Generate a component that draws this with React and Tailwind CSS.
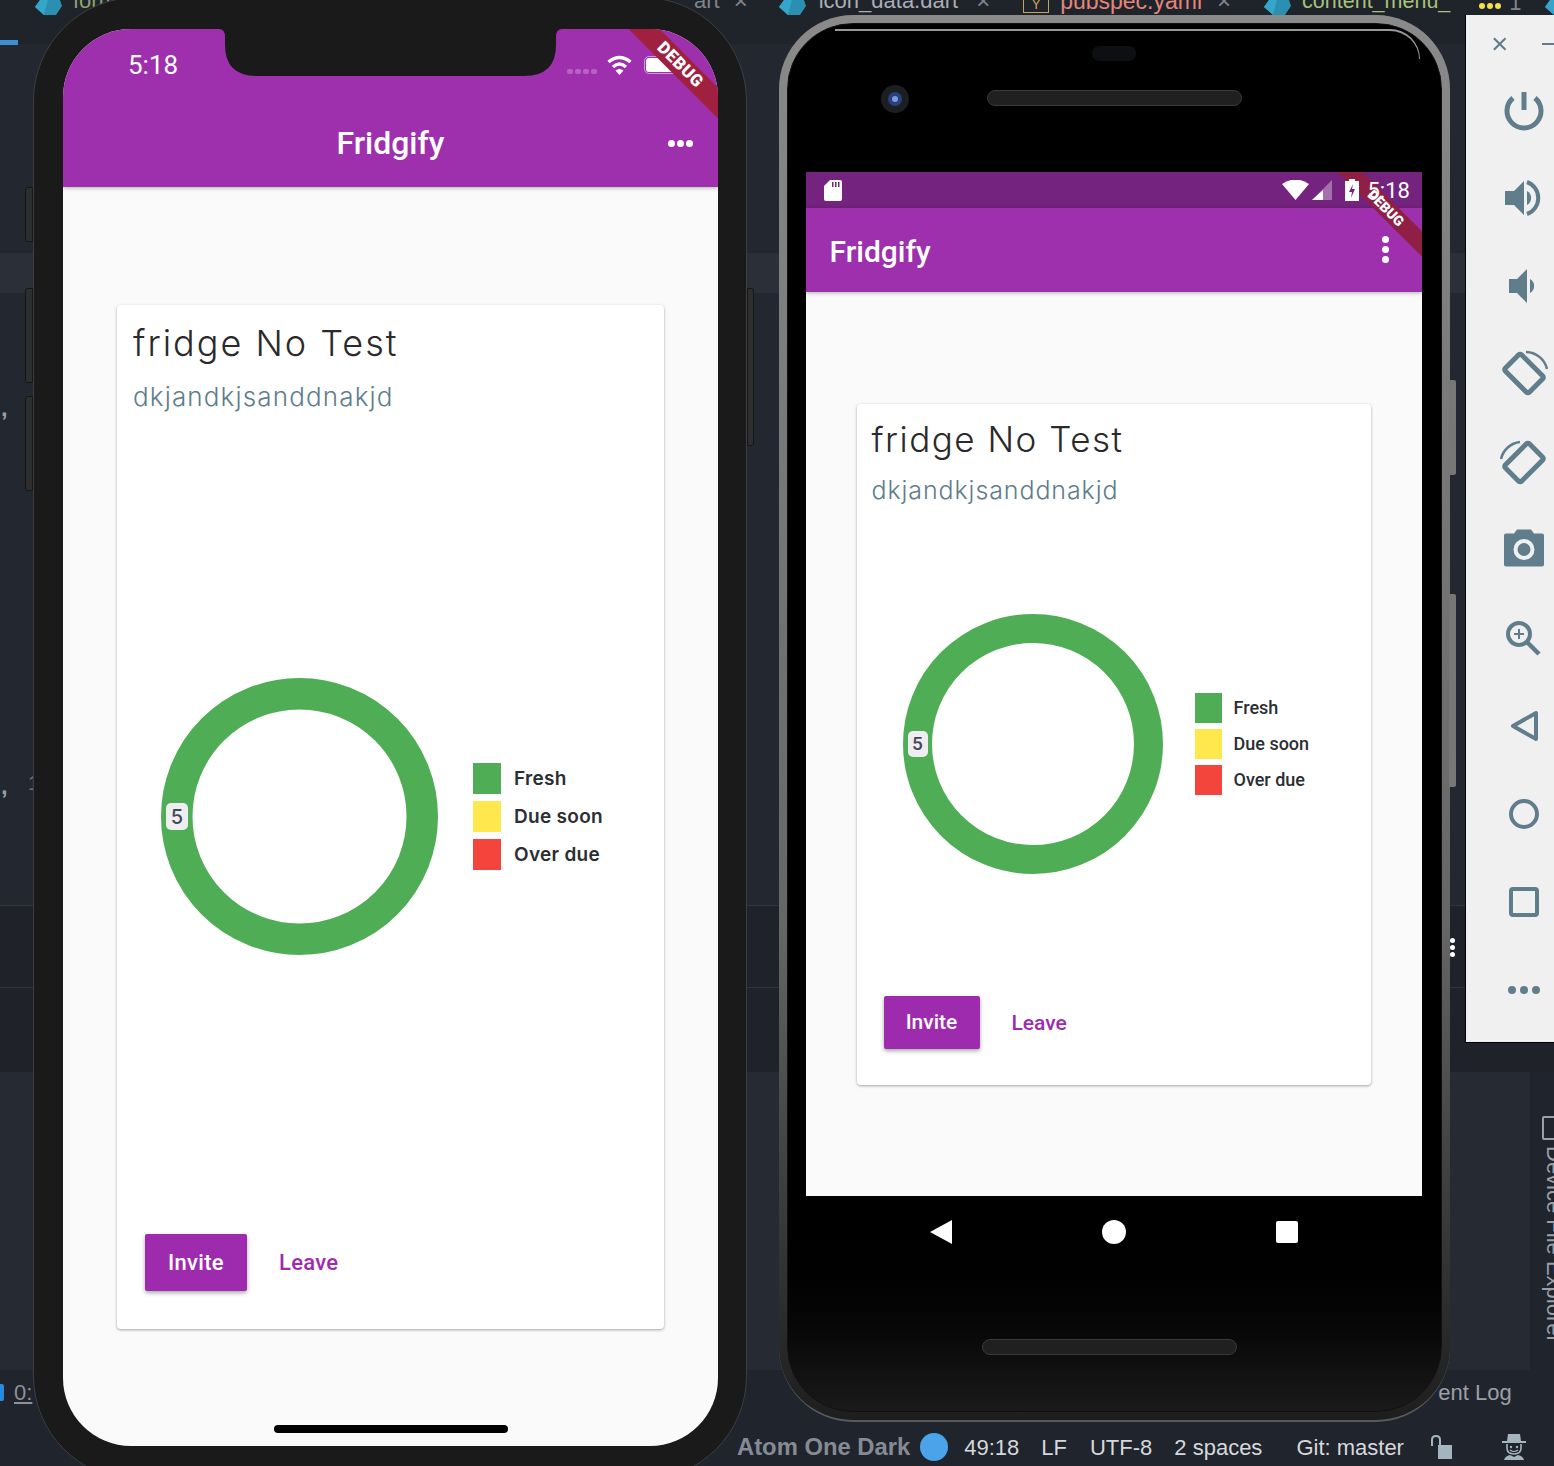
import React from "react";

function DartIcon({ className }) {
  return (
    <svg className={className} width="28" height="16" viewBox="0 0 28 16">
      <path d="M6 0 L26 0 L28 6 L22 15 L10 15 L1 7 Z" fill="#2a8fb0" />
      <path d="M6 0 L14 0 L10 15 L1 7 Z" fill="#35a6c9" />
    </svg>
  );
}

function Ring({ size, hole, children }) {
  const c = size / 2;
  const stroke = size / 2 - hole;
  return (
    <div className="relative shrink-0" style={{ width: size, height: size }}>
      <svg width={size} height={size}>
        <circle cx={c} cy={c} r={hole + stroke / 2} fill="none" stroke="#4fae55" strokeWidth={stroke} />
      </svg>
      {children}
    </div>
  );
}

function DebugBanner({ className, textClass }) {
  return (
    <div className={`absolute flex items-center justify-center rotate-45 ${className}`}>
      <span className={`font-['Roboto'] font-black text-white ${textClass}`}>DEBUG</span>
    </div>
  );
}

function IPhone() {
  return (
    <div className="absolute left-[33px] top-[-3px] w-[714px] h-[1483px] rounded-[104px] border border-[#3c3e42] bg-[#1a1a1a] pl-[29px] pr-[28px] pt-[31px] pb-[33px]">
      {/* side buttons */}
      <div className="absolute left-[-9px] top-[189px] w-[8px] h-[55px] rounded-l-[3px] border border-[#14161a] bg-[#2e2e2e]" />
      <div className="absolute left-[-9px] top-[290px] w-[8px] h-[95px] rounded-l-[3px] border border-[#14161a] bg-[#2e2e2e]" />
      <div className="absolute left-[-9px] top-[398px] w-[8px] h-[95px] rounded-l-[3px] border border-[#14161a] bg-[#2e2e2e]" />
      <div className="absolute right-[-8px] top-[290px] w-[7px] h-[158px] rounded-r-[3px] border border-[#14161a] bg-[#2e2e2e]" />

      <div className="relative h-full flex flex-col overflow-hidden rounded-[68px] bg-[#fafafa]">
        <div className="relative h-[158px] shrink-0 bg-[#9e30ad] shadow-[0_1px_4px_rgba(0,0,0,0.3)] text-white font-['Roboto']">
          <div className="flex items-center h-[72px] pl-[65px]">
            <span className="text-[26px] pt-[1px]">5:18</span>
            <div className="flex gap-[2px] ml-[389px] mt-[12px]">
              <span className="w-[6px] h-[5px] rounded-[2px] bg-white/25" />
              <span className="w-[6px] h-[5px] rounded-[2px] bg-white/25" />
              <span className="w-[6px] h-[5px] rounded-[2px] bg-white/25" />
              <span className="w-[6px] h-[5px] rounded-[2px] bg-white/25" />
            </div>
            <svg className="ml-[10px]" width="25" height="22" viewBox="0 0 25 22" fill="none" stroke="#fff" strokeWidth="3.4">
              <path d="M1.5 8 Q12.5 -1 23.500 8" />
              <path d="M6 13 Q12.5 7 19 13" />
              <path d="M12.500 21 L8.500 16.500 Q12.500 13.500 16.500 16.500 Z" fill="#fff" stroke="none" />
            </svg>
            <div className="ml-[12px] w-[35px] h-[18px] rounded-[5px] border border-white/50 p-[1px]">
              <div className="w-full h-full rounded-[3px] bg-white" />
            </div>
          </div>
          <div className="flex items-center justify-center h-[86px] -mt-[1px] text-[32px] font-medium">Fridgify</div>
          <div className="absolute right-[25px] top-[111px] flex gap-[2px]">
            <span className="w-[7px] h-[7px] rounded-full bg-white" />
            <span className="w-[7px] h-[7px] rounded-full bg-white" />
            <span className="w-[7px] h-[7px] rounded-full bg-white" />
          </div>
        </div>

        <div className="flex-1 px-[54px] pt-[118px]">
          <div className="flex flex-col rounded-[4px] bg-white shadow-[0_1px_3px_rgba(0,0,0,0.35)] pb-[38px]">
            <div className="px-[16px] pt-[15px] font-['Inter']">
              <div className="text-[36px] leading-[46px] font-light tracking-[2px] text-[#2a2a2a]">fridge No Test</div>
              <div className="mt-[15px] text-[26px] leading-[32px] font-light tracking-[1.15px] text-[#607d8b]">dkjandkjsanddnakjd</div>
            </div>
            <div className="mt-[265px] ml-[44px] flex items-center">
              <Ring size={277} hole={107}>
                <span className="absolute left-[5px] top-[125px] w-[22px] h-[27px] flex items-center justify-center rounded-[5px] bg-[#eeeef0] font-['Inter'] text-[20px] font-medium text-[#44495a]">5</span>
              </Ring>
              <div className="ml-[35px] flex flex-col gap-[7px] font-['Inter'] text-[19px] font-semibold tracking-[0.3px] text-[#2b2e33]">
                <div className="flex items-center h-[31px]"><span className="w-[28px] h-full bg-[#4fae55]" /><span className="ml-[13px] pt-[2px]">Fresh</span></div>
                <div className="flex items-center h-[31px]"><span className="w-[28px] h-full bg-[#ffe84d]" /><span className="ml-[13px] pt-[2px]">Due soon</span></div>
                <div className="flex items-center h-[31px]"><span className="w-[28px] h-full bg-[#f4453c]" /><span className="ml-[13px] pt-[2px]">Over due</span></div>
              </div>
            </div>
            <div className="mt-[279px] ml-[28px] flex items-center font-['Roboto'] text-[22px] font-medium tracking-[0.3px]">
              <button className="w-[102px] h-[57px] rounded-[2px] bg-[#9e2bae] text-white shadow-[0_2px_4px_rgba(0,0,0,0.35)]">Invite</button>
              <span className="ml-[32px] text-[#9e2bae]">Leave</span>
            </div>
          </div>
        </div>

        <svg className="absolute left-[156px] top-0" width="343" height="47" viewBox="0 0 343 47">
          <path d="M0 0 Q6 0 6 8 V16 Q6 47 38 47 H305 Q337 47 337 16 V8 Q337 0 343 0 Z" fill="#1a1a1a" />
        </svg>
        <DebugBanner className="left-[517px] top-[25px] w-[200px] h-[22px] bg-[#a02040]" textClass="text-[17px] tracking-[0.5px]" />
        <div className="absolute left-[211px] bottom-[13px] w-[234px] h-[8px] rounded-full bg-black" />
      </div>
    </div>
  );
}

function AndroidPhone() {
  return (
    <div className="absolute left-[779px] top-[15px] w-[671px] h-[1407px] rounded-[74px] bg-gradient-to-b from-[#8a8a8a] via-[#666] via-65% to-[#1e1e1e] border-b-2 border-[#5a5a5a] p-[8px]">
      <div className="absolute right-[-6px] top-[365px] w-[7px] h-[95px] rounded-r-[2px] bg-[#777]" />
      <div className="absolute right-[-6px] top-[579px] w-[7px] h-[193px] rounded-r-[2px] bg-[#777]" />

      <div className="relative h-full flex flex-col items-center overflow-hidden rounded-[66px] border border-[#111] bg-gradient-to-b from-black via-black via-85% to-[#1a1a1a]">
        <div className="absolute left-[47px] right-[21px] top-[5px] h-[30px] rounded-tr-[60px] border-t-2 border-r border-[#999]" />
        <div className="absolute left-[304px] top-[22px] w-[44px] h-[15px] rounded-[7px] bg-[#0d0f12]" />
        <div className="absolute left-[93px] top-[61px] w-[28px] h-[28px] rounded-full bg-[#1c1e22] flex items-center justify-center">
          <span className="w-[14px] h-[14px] rounded-full bg-[#27407f] flex items-center justify-center">
            <span className="w-[6px] h-[6px] rounded-full bg-[#7f9be0]" />
          </span>
        </div>
        <div className="absolute left-[199px] top-[66px] w-[255px] h-[16px] rounded-full border border-[#3a3a3a] bg-[#202020]" />

        <div className="mt-[148px] -ml-[2px] w-[616px] h-[1024px] shrink-0 relative flex flex-col overflow-hidden bg-[#fafafa]">
          <div className="h-[36px] shrink-0 flex items-center bg-[#74237f] pl-[18px] text-white font-['Roboto']">
            <svg width="18" height="21" viewBox="0 0 18 21" fill="#fff">
              <path d="M6 0 H16 Q18 0 18 2 V19 Q18 21 16 21 H2 Q0 21 0 19 V6 Z" />
              <path d="M8 2 H9.500 V7 H8 Z M11 2 H12.500 V7 H11 Z M14 2 H15.500 V7 H14 Z" fill="#74237f" />
            </svg>
            <svg className="ml-[440px]" width="27" height="20" viewBox="0 0 27 20" fill="#fff">
              <path d="M0 4 Q13.500 -5 27 4 L13.500 20 Z" />
            </svg>
            <svg className="ml-[3px]" width="20" height="20" viewBox="0 0 20 20">
              <path d="M20 0 V20 H0 Z" fill="#fff" fillOpacity="0.35" />
              <path d="M11 10 V20 H0 Z" fill="#fff" />
            </svg>
            <svg className="relative z-10 ml-[13px]" width="14" height="22" viewBox="0 0 14 22">
              <path d="M4 0 H10 V2 H14 V22 H0 V2 H4 Z" fill="#fff" />
              <path d="M8 5 L4 13 H7 L6 19 L10 10 H7 Z" fill="#74237f" />
            </svg>
            <span className="relative z-10 ml-[9px] text-[22px]">5:18</span>
          </div>
          <div className="h-[84px] shrink-0 flex items-center justify-between bg-[#9e30ad] pl-[24px] pr-[33px] text-white font-['Roboto'] shadow-[0_1px_4px_rgba(0,0,0,0.3)]">
            <span className="text-[30px] font-medium pt-[2px]">Fridgify</span>
            <div className="flex flex-col gap-[3px] mt-[-2px]">
              <span className="w-[7px] h-[7px] rounded-full bg-white" />
              <span className="w-[7px] h-[7px] rounded-full bg-white" />
              <span className="w-[7px] h-[7px] rounded-full bg-white" />
            </div>
          </div>
          <div className="flex-1 px-[51px] pt-[112px]">
            <div className="flex flex-col rounded-[4px] bg-white shadow-[0_1px_3px_rgba(0,0,0,0.35)] pb-[36px]">
              <div className="px-[15px] pt-[13px] font-['Inter']">
                <div className="text-[35px] leading-[44px] font-light tracking-[1.5px] text-[#2a2a2a]">fridge No Test</div>
                <div className="mt-[14px] text-[25px] leading-[30px] font-light tracking-[0.9px] text-[#607d8b]">dkjandkjsanddnakjd</div>
              </div>
              <div className="mt-[109px] ml-[46px] flex items-center">
                <Ring size={260} hole={101}>
                  <span className="absolute left-[5px] top-[117px] w-[20px] h-[26px] flex items-center justify-center rounded-[5px] bg-[#eeeef0] font-['Roboto'] text-[19px] font-medium text-[#44495a]">5</span>
                </Ring>
                <div className="ml-[32px] flex flex-col gap-[6px] font-['Roboto'] text-[18px] font-medium text-[#2b2e33]">
                  <div className="flex items-center h-[30px]"><span className="w-[27px] h-full bg-[#4fae55]" /><span className="ml-[12px] pb-[2px]">Fresh</span></div>
                  <div className="flex items-center h-[30px]"><span className="w-[27px] h-full bg-[#ffe84d]" /><span className="ml-[12px] pb-[2px]">Due soon</span></div>
                  <div className="flex items-center h-[30px]"><span className="w-[27px] h-full bg-[#f4453c]" /><span className="ml-[12px] pb-[2px]">Over due</span></div>
                </div>
              </div>
              <div className="mt-[122px] ml-[27px] flex items-center font-['Roboto'] text-[21px] font-medium">
                <button className="w-[96px] h-[53px] rounded-[2px] bg-[#9e2bae] text-white shadow-[0_2px_4px_rgba(0,0,0,0.35)]">Invite</button>
                <span className="ml-[32px] pt-[2px] text-[#9e2bae]">Leave</span>
              </div>
            </div>
          </div>
          <DebugBanner className="left-[500px] top-[27px] w-[160px] h-[18px] bg-[#8f1f45]" textClass="relative z-20 text-[14px]" />
        </div>

        <div className="mt-[24px] -ml-[2px] w-[368px] flex items-center justify-between">
          <svg width="22" height="24" viewBox="0 0 22 24"><path d="M22 0 V24 L0 12 Z" fill="#fff" /></svg>
          <span className="w-[24px] h-[24px] rounded-full bg-white" />
          <span className="w-[22px] h-[22px] rounded-[2px] bg-white" />
        </div>
        <div className="mt-[95px] ml-[-10px] w-[255px] h-[16px] rounded-full border border-[#3a3a3a] bg-[#202020]" />
      </div>
    </div>
  );
}

function ToolIcon({ children }) {
  return (
    <div className="h-[88px] flex items-center ml-[34px]">
      <svg width="48" height="48" viewBox="0 0 48 48" fill="none" stroke="#607d8b" strokeWidth="4">
        {children}
      </svg>
    </div>
  );
}

function EmulatorPanel() {
  return (
    <div className="absolute left-[1465px] top-[15px] w-[89px] h-[1028px] bg-[#f0f0f0] border-l border-b border-black">
      <div className="h-[51px] flex items-start pt-[21px] pl-[26px]">
        <svg width="16" height="16" viewBox="0 0 16 16" stroke="#607d8b" strokeWidth="2.200">
          <path d="M2 2 L14 14 M14 2 L2 14" />
        </svg>
        <span className="ml-[35px] mt-[7px] w-[12px] h-[2px] bg-[#607d8b]" />
      </div>
      <ToolIcon>
        <path d="M13 12 A17 17 0 1 0 35 12" strokeWidth="5" />
        <path d="M24 6 V24" strokeWidth="5" />
      </ToolIcon>
      <ToolIcon>
        <path d="M5 17 H14 L24 7 V41 L14 31 H5 Z" fill="#607d8b" stroke="none" />
        <path d="M27 17 A8 8 0 0 1 27 31 Z" fill="#607d8b" stroke="none" />
        <path d="M27 8 A17 17 0 0 1 27 40" strokeWidth="4" />
      </ToolIcon>
      <ToolIcon>
        <path d="M9 17 H17 L27 7 V41 L17 31 H9 Z" fill="#607d8b" stroke="none" />
        <path d="M30 17 A8 8 0 0 1 30 31 Z" fill="#607d8b" stroke="none" />
      </ToolIcon>
      <ToolIcon>
        <rect x="7" y="12" width="34" height="23" rx="2" transform="rotate(45 24 23.500)" strokeWidth="5" />
        <path d="M26 2 A22 22 0 0 1 47 19" strokeWidth="2.500" />
      </ToolIcon>
      <ToolIcon>
        <rect x="7" y="13" width="34" height="23" rx="2" transform="rotate(-45 24 24.500)" strokeWidth="5" />
        <path d="M1 21 A22 22 0 0 1 20 4" strokeWidth="2.500" />
      </ToolIcon>
      <ToolIcon>
        <g transform="translate(0 -1.500)">
          <path d="M4 11 Q4 9 6 9 H14 L17 5 H31 L34 9 H42 Q44 9 44 11 V40 Q44 42 42 42 H6 Q4 42 4 40 Z" fill="#607d8b" stroke="none" />
          <circle cx="24" cy="25" r="8.500" stroke="#f0f0f0" strokeWidth="4" />
        </g>
      </ToolIcon>
      <ToolIcon>
        <circle cx="19" cy="20" r="11" />
        <path d="M27 28 L39 40" strokeWidth="4.500" />
        <path d="M14 20 H24 M19 15 V25" strokeWidth="2" />
      </ToolIcon>
      <ToolIcon>
        <path d="M13 24 L36 11 V37 Z" strokeLinejoin="round" />
      </ToolIcon>
      <ToolIcon>
        <circle cx="24" cy="24" r="13" />
      </ToolIcon>
      <ToolIcon>
        <rect x="11" y="11" width="26" height="26" rx="2" />
      </ToolIcon>
      <ToolIcon>
        <circle cx="12" cy="24" r="4" fill="#607d8b" stroke="none" />
        <circle cx="24" cy="24" r="4" fill="#607d8b" stroke="none" />
        <circle cx="36" cy="24" r="4" fill="#607d8b" stroke="none" />
      </ToolIcon>
    </div>
  );
}

function TabBar() {
  return (
    <div className="h-[44px] shrink-0 flex items-start overflow-hidden whitespace-nowrap bg-[#1f232a] text-[22px] leading-[22px] font-['Liberation_Sans'] text-[#a9aeb6]">
      <DartIcon className="ml-[34px] shrink-0" />
      <span className="ml-[11px] -mt-[10px] text-[#8fa36e]">form</span>
      <span className="ml-[577px] -mt-[10px] text-[#7f848c]">art</span>
      <span className="ml-[14px] -mt-[10px] text-[24px] text-[#7f848c]">×</span>
      <DartIcon className="ml-[30px] shrink-0" />
      <span className="ml-[13px] -mt-[10px]">icon_data.dart</span>
      <span className="ml-[18px] -mt-[10px] text-[24px] text-[#7f848c]">×</span>
      <span className="ml-[33px] -mt-[2px] w-[26px] h-[15px] border border-[#c9a25d] text-[#c9a25d] text-[14px] text-center leading-[10px]">Y</span>
      <span className="ml-[11px] -mt-[10px] text-[23px] text-[#e5857b]">pubspec.yaml</span>
      <span className="ml-[15px] -mt-[10px] text-[24px] text-[#7f848c]">×</span>
      <DartIcon className="ml-[32px] shrink-0" />
      <span className="ml-[11px] -mt-[10px] text-[21.500px] text-[#a9c07e]">content_menu_</span>
      <div className="ml-[29px] mt-[3px] flex gap-[2px]">
        <span className="w-[6px] h-[6px] rounded-full bg-[#f5e050]" />
        <span className="w-[6px] h-[6px] rounded-full bg-[#f5e050]" />
        <span className="w-[6px] h-[6px] rounded-full bg-[#f5e050]" />
      </div>
      <span className="ml-[8px] -mt-[8px] text-[#7f848c]">1</span>
    </div>
  );
}

function StatusBar() {
  return (
    <div className="h-[96px] shrink-0 whitespace-nowrap bg-[#20242c] font-['Liberation_Sans'] text-[22px]">
      <div className="h-[44px] flex items-center">
        <span className="w-[4px] h-[17px] rounded-r-[2px] bg-[#2a8ae0]" />
        <span className="ml-[10px] text-[#8c929c] underline">0:</span>
        <span className="ml-[1406px] text-[#9aa0a8]">ent Log</span>
      </div>
      <div className="h-[38px] mt-[14px] flex items-center text-[#d5d8dc]">
        <span className="ml-[737px] text-[23.800px] font-bold text-[#858b95]">Atom One Dark</span>
        <span className="ml-[10px] w-[28px] h-[28px] rounded-full bg-[#4ba3ea]" />
        <span className="ml-[16px]">49:18</span>
        <span className="ml-[22px]">LF</span>
        <span className="ml-[23px]">UTF-8</span>
        <span className="ml-[22px]">2 spaces</span>
        <span className="ml-[34px]">Git: master</span>
        <svg className="ml-[26px]" width="22" height="24" viewBox="0 0 22 24" fill="none">
          <path d="M2 11 V5 Q2 1 6 1 Q10 1 10 5 V10" stroke="#a4b5bf" strokeWidth="2" />
          <rect x="8" y="10" width="14" height="14" fill="#a4b5bf" />
        </svg>
        <svg className="ml-[50px]" width="24" height="26" viewBox="0 0 24 26" fill="#a4b5bf">
          <path d="M6 0 H18 L19 7 H24 V9 H0 V7 H5 Z" />
          <path d="M5 10 V14 Q5 20 12 20 Q19 20 19 14 V10" fill="none" stroke="#a4b5bf" strokeWidth="1.600" />
          <circle cx="9" cy="13" r="1.200" />
          <circle cx="15" cy="13" r="1.200" />
          <path d="M8 16 Q12 19 16 16" fill="none" stroke="#a4b5bf" strokeWidth="1.200" />
          <path d="M2 26 Q3 22 8 21 L12 23 L16 21 Q21 22 22 26 Z" />
        </svg>
      </div>
    </div>
  );
}

export default function App() {
  return (
    <div className="relative w-[1554px] h-[1466px] overflow-hidden flex flex-col bg-[#242932]">
      <TabBar />
      <div className="h-[209px] shrink-0 bg-[#232830]" />
      <div className="h-[40px] shrink-0 bg-[#2a2f38]" />
      <div className="h-[612px] shrink-0 bg-[#232830]" />
      <div className="h-[82px] shrink-0 border-t border-[#30353d] bg-[#1f2229]" />
      <div className="h-[85px] shrink-0 border-t border-[#30353d] bg-[#1f2229]" />
      <div className="h-[298px] shrink-0 bg-[#20242c]">
        <div className="w-[1530px] h-full bg-[#262b33]" />
      </div>
      <StatusBar />

      {/* leftovers of the editor behind the simulators */}
      <div className="absolute left-0 top-[40px] w-[18px] h-[5px] bg-[#3d8fd1]" />
      <span className="absolute left-[1px] top-[390px] font-['Liberation_Sans'] text-[24px] font-bold text-[#9aa0a8]">,</span>
      <span className="absolute left-[1px] top-[768px] font-['Liberation_Sans'] text-[24px] font-bold text-[#9aa0a8]">,</span>
      <span className="absolute left-[28px] top-[768px] font-['Liberation_Sans'] text-[20px] text-[#6f747c]">1</span>
      <div className="absolute left-[1542px] top-[1116px] w-[14px] h-[24px] rounded-[2px] border-2 border-[#9aa0a8]" />
      <span className="absolute left-[1538px] top-[1146px] [writing-mode:vertical-rl] font-['Liberation_Sans'] text-[22px] text-[#9aa0a8]">Device File Explorer</span>
      <DartIcon className="absolute left-[1544px] top-0" />

      <IPhone />
      <AndroidPhone />
      <EmulatorPanel />
      <div className="absolute left-[1450px] top-[938px] flex flex-col gap-[2px]">
        <span className="w-[5px] h-[5px] rounded-full bg-white" />
        <span className="w-[5px] h-[5px] rounded-full bg-white" />
        <span className="w-[5px] h-[5px] rounded-full bg-white" />
      </div>
    </div>
  );
}
